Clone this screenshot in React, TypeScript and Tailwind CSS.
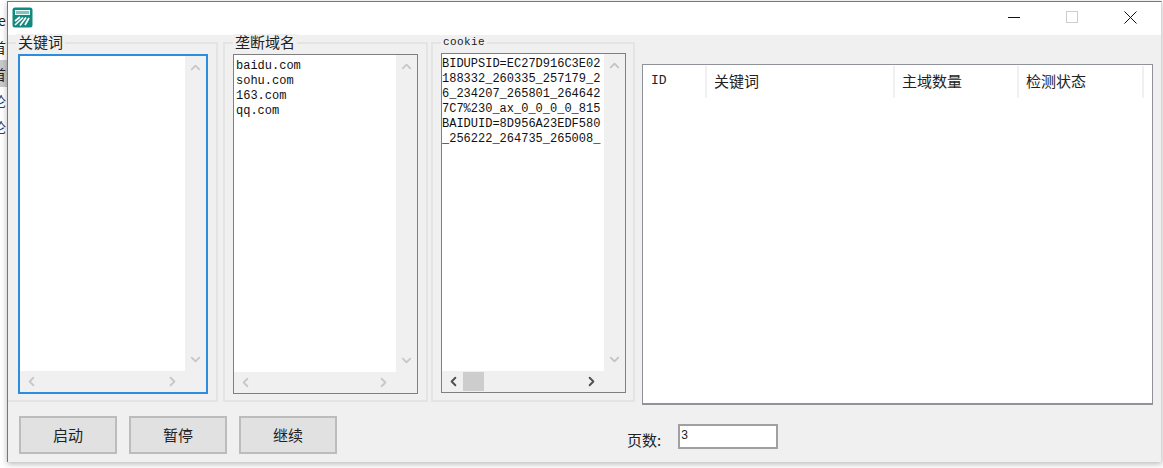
import { ChevronUp, ChevronDown, ChevronLeft, ChevronRight } from "lucide-react";

const domains = ["baidu.com", "sohu.com", "163.com", "qq.com"];

const cookies = [
  "BIDUPSID=EC27D916C3E02",
  "188332_260335_257179_2",
  "6_234207_265801_264642",
  "7C7%230_ax_0_0_0_0_815",
  "BAIDUID=8D956A23EDF580",
  "_256222_264735_265008_",
];

const columns = [
  { label: "ID", width: "w-[63px]", mono: true },
  { label: "关键词", width: "w-[188px]" },
  { label: "主域数量", width: "w-[124px]" },
  { label: "检测状态", width: "w-[125px]" },
];

function Logo() {
  return (
    <svg width="21" height="21" viewBox="0 0 21 21" className="shrink-0">
      <rect x="0.5" y="0.5" width="20" height="20" rx="2.5" fill="#12897f" />
      <rect x="3.5" y="3.5" width="14" height="4" fill="#7cc4bd" stroke="#e9f7f5" strokeWidth="1" />
      <path
        d="M3 14 L8 10 M3 18 L11 10.5 M8 18.5 L14 10.5 M13 18 L17 11"
        stroke="#ffffff"
        strokeWidth="1.7"
        fill="none"
      />
    </svg>
  );
}

function ListBox({
  children,
  active,
  wide,
  className,
}: {
  children?: React.ReactNode;
  active?: boolean;
  wide?: boolean;
  className: string;
}) {
  const arrow = wide ? "text-[#c4c4c4]" : "text-[#c8c8c8]";
  const hArrow = wide ? "text-[#505050]" : "text-[#c8c8c8]";
  return (
    <div
      className={`flex flex-col bg-[#f0f0f0] ${
        active ? "border-2 border-[#2b8ce0]" : "border border-[#7f7f7f]"
      } ${className}`}
    >
      <div className="flex min-h-0 flex-1">
        <div
          className={`min-w-0 flex-1 overflow-hidden bg-white font-['Liberation_Mono',monospace] text-[12px] leading-[15px] whitespace-nowrap text-[#111] ${
            wide ? "pl-0 pt-[3px]" : "pl-[2px] pt-[4px]"
          }`}
        >
          {children}
        </div>
        <div className="flex w-[21px] shrink-0 flex-col items-center justify-between py-[4px] pr-[1px]">
          <ChevronUp size={15} strokeWidth={3} className={arrow} />
          <ChevronDown size={15} strokeWidth={3} className={arrow} />
        </div>
      </div>
      <div className="flex h-[21px] shrink-0 items-center justify-between pl-[4px] pr-[26px]">
        <ChevronLeft size={15} strokeWidth={3} className={hArrow} />
        {wide && <div className="ml-[2px] mr-auto h-[19px] w-[21px] bg-[#cdcdcd]" />}
        <ChevronRight size={15} strokeWidth={3} className={hArrow} />
      </div>
    </div>
  );
}

function Group({
  title,
  mono,
  className,
  children,
}: {
  title: string;
  mono?: boolean;
  className: string;
  children: React.ReactNode;
}) {
  return (
    <div className={`relative h-[360px] border-2 border-[#e4e4e4] ${className}`}>
      <span
        className={`absolute left-[8px] bg-[#f0f0f0] px-[2px] text-[#222] ${
          mono
            ? "-top-[9px] font-['Liberation_Mono',monospace] text-[11px] leading-[14px] tracking-[0.4px]"
            : "-top-[10px] text-[15px] leading-[16px]"
        }`}
      >
        {title}
      </span>
      {children}
    </div>
  );
}

function ActionButton({ label }: { label: string }) {
  return (
    <button className="h-[38px] w-[98px] border-2 border-[#bcbcbc] bg-[#e1e1e1] text-[15px] text-[#222]">
      {label}
    </button>
  );
}

export default function App() {
  return (
    <div className="relative h-[468px] w-[1163px] overflow-hidden bg-white font-['Noto_Sans_CJK_SC','Liberation_Sans',sans-serif]">
      {/* window behind, only a sliver shows */}
      <div className="absolute left-0 top-0 h-[468px] w-[7px] overflow-hidden text-[14px] leading-[20px] text-[#222]">
        <div className="absolute left-[-2px] top-[10px]">e</div>
        <div className="absolute left-[-8px] top-[37px]">首</div>
        <div className="absolute left-0 top-[60px] h-[27px] w-[7px] bg-[#c9c9c9]" />
        <div className="absolute left-[-8px] top-[64px]">首</div>
        <div className="absolute left-[-8px] top-[91px] text-[#1a3f80]">论</div>
        <div className="absolute left-[-8px] top-[117px] text-[#1a3f80]">论</div>
      </div>

      <div className="relative ml-[7px] mt-[1px] h-[461px] w-[1155px] border-l border-r border-t border-l-[#777] border-r-[#d8d8d8] border-t-[#777] bg-[#f0f0f0] shadow-[0_2px_6px_rgba(0,0,0,0.28)]">
        {/* title bar */}
        <div className="flex h-[33px] items-center bg-white pb-[3px] pl-[4px]">
          <Logo />
          <div className="ml-auto flex items-center">
            <svg width="13" height="13" viewBox="0 0 13 13" className="mr-[46px]">
              <path d="M1 6.5 H13" stroke="#111" strokeWidth="1" />
            </svg>
            <div className="mr-[46px] h-[12px] w-[12px] border border-[#cdcdcd]" />
            <svg width="13" height="13" viewBox="0 0 13 13" className="mr-[24px]">
              <path d="M0.5 0.5 L12.5 12.5 M12.5 0.5 L0.5 12.5" stroke="#111" strokeWidth="1" />
            </svg>
          </div>
        </div>

        {/* panels */}
        <div className="mt-[7px] flex items-start">
          <Group title="关键词" className="w-[210px] border-l-0 pl-[10px] pt-[10px]">
            <ListBox active className="h-[340px] w-[190px]" />
          </Group>
          <Group title="垄断域名" className="ml-[5px] w-[205px] pl-[8px] pt-[10px]">
            <ListBox className="h-[340px] w-[185px]">
              {domains.map((d) => (
                <div key={d}>{d}</div>
              ))}
            </ListBox>
          </Group>
          <Group title="cookie" mono className="ml-[3px] w-[204px] pl-[8px] pt-[9px]">
            <ListBox wide className="h-[340px] w-[185px]">
              <div>
                {cookies.map((c) => (
                  <div key={c}>{c}</div>
                ))}
              </div>
            </ListBox>
          </Group>

          {/* result table */}
          <div className="ml-[7px] mt-[22px] h-[341px] w-[511px] border border-[#8f9299] border-b-2 bg-white p-[1px]">
            <div className="flex h-[32px]">
              {columns.map((c) => (
                <div
                  key={c.label}
                  className={`flex h-full items-center border-r-2 border-[#f0f0f0] pb-[2px] pl-[7px] text-[#222] ${c.width} ${
                    c.mono
                      ? "font-['Liberation_Mono',monospace] text-[13px]"
                      : "text-[15px]"
                  }`}
                >
                  {c.label}
                </div>
              ))}
            </div>
          </div>
        </div>

        {/* bottom actions */}
        <div className="mt-[11px] flex items-start pl-[11px]">
          <div className="flex gap-[12px]">
            <ActionButton label="启动" />
            <ActionButton label="暂停" />
            <ActionButton label="继续" />
          </div>
          <span className="ml-[290px] mt-[14px] text-[15px] leading-[20px] text-[#222]">页数:</span>
          <div className="ml-[17px] mt-[8px] h-[25px] w-[100px] border-2 border-[#a0a0a0] bg-white pl-[1px] font-['Liberation_Sans',sans-serif] text-[12px] leading-[18px] text-[#222]">
            3
          </div>
        </div>
      </div>
    </div>
  );
}
